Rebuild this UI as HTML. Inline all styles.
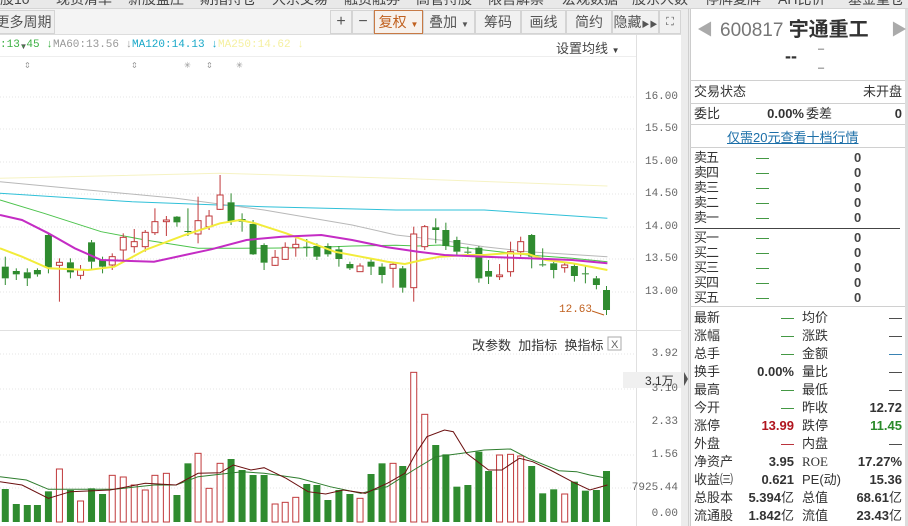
<!DOCTYPE html>
<html><head><meta charset="utf-8">
<style>
*{margin:0;padding:0;box-sizing:border-box}
body{width:908px;height:526px;overflow:hidden;background:#fff;font-family:"Liberation Sans","Noto Sans CJK SC",sans-serif;position:relative;color:#333}
.a{position:absolute;white-space:nowrap}
.top{left:0;top:0;width:908px;height:9px;background:#e9e9e9;overflow:hidden;border-bottom:1px solid #d5d5d5}
.top span{position:absolute;top:-11px;font-size:14px;color:#444}
.tb{left:0;top:9px;width:681px;height:26px;background:#f4f4f4;border-bottom:1px solid #ddd}
.btn{position:absolute;top:10px;height:24px;border:1px solid #d4d4d4;background:#f1f1f1;font-size:14px;color:#555;text-align:center;line-height:22px}
.mono{font-family:"Liberation Mono","DejaVu Sans Mono",monospace;font-size:11px}
.ax{font-family:"Liberation Mono",monospace;font-size:11px;color:#666;left:638px;width:40px;text-align:right}
.rp{left:690px;top:9px;width:215px;height:517px;background:#fff;border-left:1px solid #ccc}
.row{position:absolute;left:4px;width:208px;font-size:13px;height:18px;line-height:18px}
.row .l{position:absolute;left:0}
.row .v1{position:absolute;right:108px;font-weight:bold}
.row .l2{position:absolute;left:108px}
.row .v2{position:absolute;right:0;font-weight:bold}
.ob{position:absolute;left:4px;width:200px;font-size:13px;height:15px;line-height:15px}
.ob .l{position:absolute;left:0;letter-spacing:-1px}
.ob .m{position:absolute;left:62px;color:#2a8a2a}
.ob .n{position:absolute;left:160px;font-weight:bold;color:#444}
.hl{position:absolute;left:690px;width:215px;height:1px;background:#d0d0d0}
</style></head><body>
<div class="a top">
<span style="left:0">股10</span><span style="left:56px">现货清单</span><span style="left:128px">新股盘庄</span><span style="left:200px">期指持仓</span><span style="left:272px">大宗交易</span><span style="left:344px">融资融券</span><span style="left:416px">高管持股</span><span style="left:488px">限售解禁</span><span style="left:562px">宏观数据</span><span style="left:632px">股东人数</span><span style="left:705px">停牌复牌</span><span style="left:778px">AH比价</span><span style="left:848px">基金重仓</span>
</div>
<div class="a tb"></div>
<div class="btn" style="left:-8px;width:63px;background:#efefef">更多周期 <span style="font-size:8px">▼</span></div>
<div class="btn" style="left:330px;width:22px;font-size:16px">+</div>
<div class="btn" style="left:352px;width:22px;font-size:16px">−</div>
<div class="btn" style="left:374px;width:49px;border-color:#c87a45;color:#c0601e;background:#f7f1ec">复权 <span style="font-size:8px">▼</span></div>
<div class="btn" style="left:423px;width:52px">叠加 <span style="font-size:8px">▼</span></div>
<div class="btn" style="left:475px;width:46px">筹码</div>
<div class="btn" style="left:521px;width:45px">画线</div>
<div class="btn" style="left:566px;width:46px">简约</div>
<div class="btn" style="left:612px;width:47px">隐藏<span style="font-size:8px">▶▶</span></div>
<div class="btn" style="left:659px;width:22px;font-size:11px">⛶</div>

<div class="a mono" style="left:0;top:39px;color:#3cb043">:13.45 <b>↓</b></div>
<div class="a mono" style="left:53px;top:39px;color:#999">MA60:13.56 ↓</div>
<div class="a mono" style="left:132px;top:39px;color:#18a8c8">MA120:14.13 <b>↓</b></div>
<div class="a mono" style="left:218px;top:39px;color:#f5f0a0">MA250:14.62 ↓</div>
<div class="a" style="left:556px;top:38px;font-size:13px;color:#444">设置均线 <span style="font-size:8px">▼</span></div>
<div class="a" style="left:0;top:56px;width:636px;height:1px;background:#eee"></div>
<div class="a mono" style="left:24px;top:58px;color:#999">⇕</div>
<div class="a mono" style="left:131px;top:58px;color:#999">⇕</div>
<div class="a mono" style="left:184px;top:58px;color:#999">✳</div>
<div class="a mono" style="left:206px;top:58px;color:#999">⇕</div>
<div class="a mono" style="left:236px;top:58px;color:#999">✳</div>

<svg class="a" style="left:0;top:0" width="690" height="526" id="sv">
<g stroke="#e4e4e4" stroke-dasharray="1,2">
<line x1="0" y1="97" x2="636" y2="97"/><line x1="0" y1="129" x2="636" y2="129"/><line x1="0" y1="162" x2="636" y2="162"/><line x1="0" y1="194" x2="636" y2="194"/><line x1="0" y1="227" x2="636" y2="227"/><line x1="0" y1="259" x2="636" y2="259"/><line x1="0" y1="292" x2="636" y2="292"/>
<line x1="0" y1="354" x2="636" y2="354"/><line x1="0" y1="389" x2="636" y2="389"/><line x1="0" y1="422" x2="636" y2="422"/><line x1="0" y1="455" x2="636" y2="455"/><line x1="0" y1="488" x2="636" y2="488"/>
</g>
<line x1="636.5" y1="35" x2="636.5" y2="526" stroke="#e0e0e0"/>
<line x1="0" y1="330.5" x2="681" y2="330.5" stroke="#e0e0e0"/>
<rect x="681" y="9" width="9" height="517" fill="#ececec"/>
<line x1="688.5" y1="9" x2="688.5" y2="526" stroke="#cfcfcf"/>
<rect x="623" y="372" width="58" height="16" fill="#f0f0f0"/>
<path d="M684 372 L688 379 L684 386Z" fill="#555"/>
<rect x="608" y="337" width="13" height="13" fill="#fff" stroke="#aaa"/>
<text x="611" y="348" font-size="11" fill="#666" font-family="Liberation Sans">X</text>
<text x="559" y="312" font-size="11" fill="#c0601e" font-family="Liberation Mono">12.63</text>
<path d="M592 311 L604 315" stroke="#c0601e" stroke-width="1" fill="none"/>
</svg>

<div class="a ax" style="top:91px">16.00</div>
<div class="a ax" style="top:123px">15.50</div>
<div class="a ax" style="top:156px">15.00</div>
<div class="a ax" style="top:188px">14.50</div>
<div class="a ax" style="top:221px">14.00</div>
<div class="a ax" style="top:253px">13.50</div>
<div class="a ax" style="top:286px">13.00</div>
<div class="a ax" style="top:348px">3.92</div>
<div class="a ax" style="top:383px">3.10</div>
<div class="a ax" style="top:416px">2.33</div>
<div class="a ax" style="top:449px">1.56</div>
<div class="a ax" style="top:482px;left:630px;width:48px">7925.44</div>
<div class="a ax" style="top:508px">0.00</div>
<div class="a" style="left:645px;top:372px;font-size:12px;color:#333">3.1万</div>
<div class="a" style="left:472px;top:335px;font-size:13px;color:#333">改参数&nbsp; 加指标&nbsp; 换指标</div>

<div class="a rp"></div>
<div class="a" style="left:905px;top:9px;width:3px;height:517px;background:#ddd"></div>
<div class="a" style="left:697px;top:16px;font-size:16px;color:#aaa">◀</div>
<div class="a" style="left:891px;top:16px;font-size:16px;color:#aaa">▶</div>
<div class="a" style="left:720px;top:13px;font-size:19px;color:#777">600817 <b style="color:#333;font-size:20px">宇通重工</b></div>
<div class="a" style="left:785px;top:46px;font-size:18px;font-weight:bold;color:#333">--</div>
<div class="a" style="left:818px;top:40px;font-size:11px;color:#555;line-height:19px">–<br>–</div>
<div class="hl" style="top:80px"></div>
<div class="row" style="left:694px;top:83px"><span class="l">交易状态</span><span class="v2" style="font-weight:normal">未开盘</span></div>
<div class="hl" style="top:103px"></div>
<div class="row" style="left:694px;top:105px"><span class="l">委比</span><span class="v1" style="right:98px">0.00%</span><span class="l2" style="left:112px">委差</span><span class="v2">0</span></div>
<div class="hl" style="top:124px"></div>
<div class="a" style="left:727px;top:127px;font-size:13px;color:#1c6fa8;text-decoration:underline">仅需20元查看十档行情</div>
<div class="hl" style="top:147px"></div>
<div class="ob" style="left:694px;top:150px"><span class="l">卖五</span><span class="m">—</span><span class="n">0</span></div>
<div class="ob" style="left:694px;top:165px"><span class="l">卖四</span><span class="m">—</span><span class="n">0</span></div>
<div class="ob" style="left:694px;top:180px"><span class="l">卖三</span><span class="m">—</span><span class="n">0</span></div>
<div class="ob" style="left:694px;top:195px"><span class="l">卖二</span><span class="m">—</span><span class="n">0</span></div>
<div class="ob" style="left:694px;top:210px"><span class="l">卖一</span><span class="m">—</span><span class="n">0</span></div>
<div class="a" style="left:694px;top:228px;width:206px;height:1px;background:#444"></div>
<div class="ob" style="left:694px;top:230px"><span class="l">买一</span><span class="m">—</span><span class="n">0</span></div>
<div class="ob" style="left:694px;top:245px"><span class="l">买二</span><span class="m">—</span><span class="n">0</span></div>
<div class="ob" style="left:694px;top:260px"><span class="l">买三</span><span class="m">—</span><span class="n">0</span></div>
<div class="ob" style="left:694px;top:275px"><span class="l">买四</span><span class="m">—</span><span class="n">0</span></div>
<div class="ob" style="left:694px;top:290px"><span class="l">买五</span><span class="m">—</span><span class="n">0</span></div>
<div class="hl" style="top:306px"></div>
<div class="row" style="left:694px;top:309px"><span class="l">最新</span><span class="v1" style="color:#2a8a2a;font-weight:normal">—</span><span class="l2">均价</span><span class="v2" style="font-weight:normal">—</span></div>
<div class="row" style="left:694px;top:327px"><span class="l">涨幅</span><span class="v1" style="color:#2a8a2a;font-weight:normal">—</span><span class="l2">涨跌</span><span class="v2" style="font-weight:normal">—</span></div>
<div class="row" style="left:694px;top:345px"><span class="l">总手</span><span class="v1" style="color:#2a8a2a;font-weight:normal">—</span><span class="l2">金额</span><span class="v2" style="color:#1c6fa8;font-weight:normal">—</span></div>
<div class="row" style="left:694px;top:363px"><span class="l">换手</span><span class="v1">0.00%</span><span class="l2">量比</span><span class="v2" style="font-weight:normal">—</span></div>
<div class="row" style="left:694px;top:381px"><span class="l">最高</span><span class="v1" style="color:#2a8a2a;font-weight:normal">—</span><span class="l2">最低</span><span class="v2" style="font-weight:normal">—</span></div>
<div class="row" style="left:694px;top:399px"><span class="l">今开</span><span class="v1" style="color:#2a8a2a;font-weight:normal">—</span><span class="l2">昨收</span><span class="v2">12.72</span></div>
<div class="row" style="left:694px;top:417px"><span class="l">涨停</span><span class="v1" style="color:#b0141e">13.99</span><span class="l2">跌停</span><span class="v2" style="color:#2a8a2a">11.45</span></div>
<div class="row" style="left:694px;top:435px"><span class="l">外盘</span><span class="v1" style="color:#b0141e;font-weight:normal">—</span><span class="l2">内盘</span><span class="v2" style="font-weight:normal">—</span></div>
<div class="row" style="left:694px;top:453px"><span class="l">净资产</span><span class="v1">3.95</span><span class="l2" style="font-family:'Liberation Serif',serif">ROE</span><span class="v2">17.27%</span></div>
<div class="row" style="left:694px;top:471px"><span class="l">收益㈢</span><span class="v1">0.621</span><span class="l2">PE(动)</span><span class="v2">15.36</span></div>
<div class="row" style="left:694px;top:489px"><span class="l">总股本</span><span class="v1">5.394<span style="font-weight:normal">亿</span></span><span class="l2">总值</span><span class="v2">68.61<span style="font-weight:normal">亿</span></span></div>
<div class="row" style="left:694px;top:507px"><span class="l">流通股</span><span class="v1">1.842<span style="font-weight:normal">亿</span></span><span class="l2">流值</span><span class="v2">23.43<span style="font-weight:normal">亿</span></span></div>

<script>
var sx=2.272;
var C=[
[12,'g',320,355,290,375],[37,'g',333,343,325,360],[62,'g',337,355,325,378],[85,'g',330,343,325,350],[110,'g',225,322,220,340],
[135,'r',307,316,295,425],[160,'g',307,337,295,355],[183,'r',330,346,315,358],[208,'g',247,305,240,330],[233,'g',300,320,290,340],
[255,'r',290,315,280,330],[280,'r',232,270,220,300],[305,'r',245,260,207,278],[330,'r',217,260,210,275],[352,'r',185,218,145,225],
[378,'r',180,185,168,228],[402,'g',170,187,168,200],[427,'g',213,216,145,228],[450,'r',182,222,110,250],[475,'r',168,200,150,210],
[500,'r',105,148,45,150],[525,'g',127,183,100,195],[550,'g',177,185,160,215],[575,'g',192,283,180,285],[600,'g',255,308,250,330],
[625,'r',292,316,270,318],[648,'r',262,298,247,300],[672,'r',253,263,235,290],[697,'g',260,263,237,290],[720,'g',258,290,250,300],
[745,'g',258,283,250,290],[770,'g',268,297,258,320],[795,'g',312,325,305,330],[818,'r',318,335,310,335],[843,'g',305,320,298,345],
[868,'g',320,345,310,370],[893,'r',313,325,305,383],[915,'g',325,383,318,398],[940,'r',222,383,200,425],[965,'r',200,260,195,270],
[990,'g',202,210,175,250],[1013,'g',210,258,188,270],[1038,'g',240,275,230,285],[1063,'g',275,278,260,285],[1088,'g',263,355,258,368],
[1110,'g',333,350,300,372],[1135,'r',345,350,312,360],[1160,'r',275,335,245,350],[1183,'r',245,275,230,290],[1208,'g',225,290,222,325],
[1233,'g',313,316,265,320],[1258,'g',310,330,300,355],[1283,'r',315,323,305,338],[1305,'g',318,348,310,365],[1330,'g',340,343,315,370],
[1355,'g',355,375,348,388],[1378,'g',390,450,378,465]];
var V=[477,522,525,525,484,417,480,513,475,492,436,441,465,480,436,430,495,400,370,475,400,387,420,435,435,522,517,502,462,465,510,480,492,505,432,400,400,408,127,253,345,373,470,465,365,423,375,373,378,408,490,478,492,455,482,480,423];
var G='#2f8b2f',R='#c0393b',s='';
function L(p,col,w,oy){var d='';for(var i=0;i<p.length;i+=2){d+=(i?'L':'M')+(p[i]/sx).toFixed(1)+' '+(oy+p[i+1]/3).toFixed(1);}return '<path d="'+d+'" fill="none" stroke="'+col+'" stroke-width="'+w+'"/>';}
s+=L([0,55,500,40,900,55,1380,78],'#f6f3c4',1,160);
s+=L([0,100,300,125,600,140,900,150,1100,150,1380,175],'#2fc0d8',1,160);
s+=L([0,65,200,90,400,115,600,150,800,195,900,225,1000,240,1100,260,1200,275,1380,290],'#b8b8b8',1,160);
s+=L([0,120,100,160,230,215,330,240,450,265,550,265,700,263,800,258,900,256,950,258,1000,255,1100,270,1200,285,1300,295,1380,305],'#4cc34c',1,160);
for(var i=0;i<C.length;i++){var c=C[i],x=c[0]/sx,col=c[1]=='g'?G:R;
var bt=160+c[2]/3,bb=160+c[3]/3,wt=160+c[4]/3,wb=160+c[5]/3;
s+='<line x1="'+x+'" y1="'+wt+'" x2="'+x+'" y2="'+bt+'" stroke="'+col+'"/><line x1="'+x+'" y1="'+bb+'" x2="'+x+'" y2="'+wb+'" stroke="'+col+'"/>';
var h=Math.max(bb-bt,1);
if(c[1]=='g')s+='<rect x="'+(x-3.5)+'" y="'+bt+'" width="7" height="'+h+'" fill="'+G+'"/>';
else s+='<rect x="'+(x-3)+'" y="'+bt+'" width="6" height="'+h+'" fill="#fff" stroke="'+R+'"/>';
var vt=330+V[i]/3;
if(c[1]=='g')s+='<rect x="'+(x-3.5)+'" y="'+vt+'" width="7" height="'+(522-vt)+'" fill="'+G+'"/>';
else s+='<rect x="'+(x-3)+'" y="'+vt+'" width="6" height="'+(522-vt)+'" fill="#fff" stroke="'+R+'"/>';
}
s+=L([0,265,50,290,110,325,200,330,260,320,330,270,420,225,500,190,545,180,580,190,650,220,700,245,760,275,820,290,880,305,920,312,960,300,1000,290,1060,285,1100,285,1150,280,1200,282,1240,300,1300,310,1380,330],'#f2ec3a',2,160);
s+=L([0,165,50,180,110,220,170,265,230,300,350,305,420,285,480,268,560,240,640,230,730,225,800,240,880,262,950,275,1010,285,1100,290,1200,295,1300,300,1380,310],'#c42cc4',2,160);
s+=L([0,440,60,450,110,478,180,478,260,478,350,465,400,465,450,440,550,425,600,430,680,445,750,470,820,490,880,470,940,420,990,380,1050,370,1100,360,1160,357,1200,385,1270,422,1310,425,1340,435,1380,445],'#2e7d2e',1,330);
s+=L([0,455,50,465,110,505,160,485,250,480,330,460,400,465,450,430,500,428,530,405,570,420,600,413,650,445,700,485,740,492,780,480,830,490,880,460,920,430,945,370,970,320,1010,300,1030,305,1060,370,1110,420,1140,420,1180,385,1210,395,1250,420,1300,455,1340,480,1380,465],'#6b1010',1,330);
document.getElementById('sv').insertAdjacentHTML('beforeend',s);
</script>
</body></html>
